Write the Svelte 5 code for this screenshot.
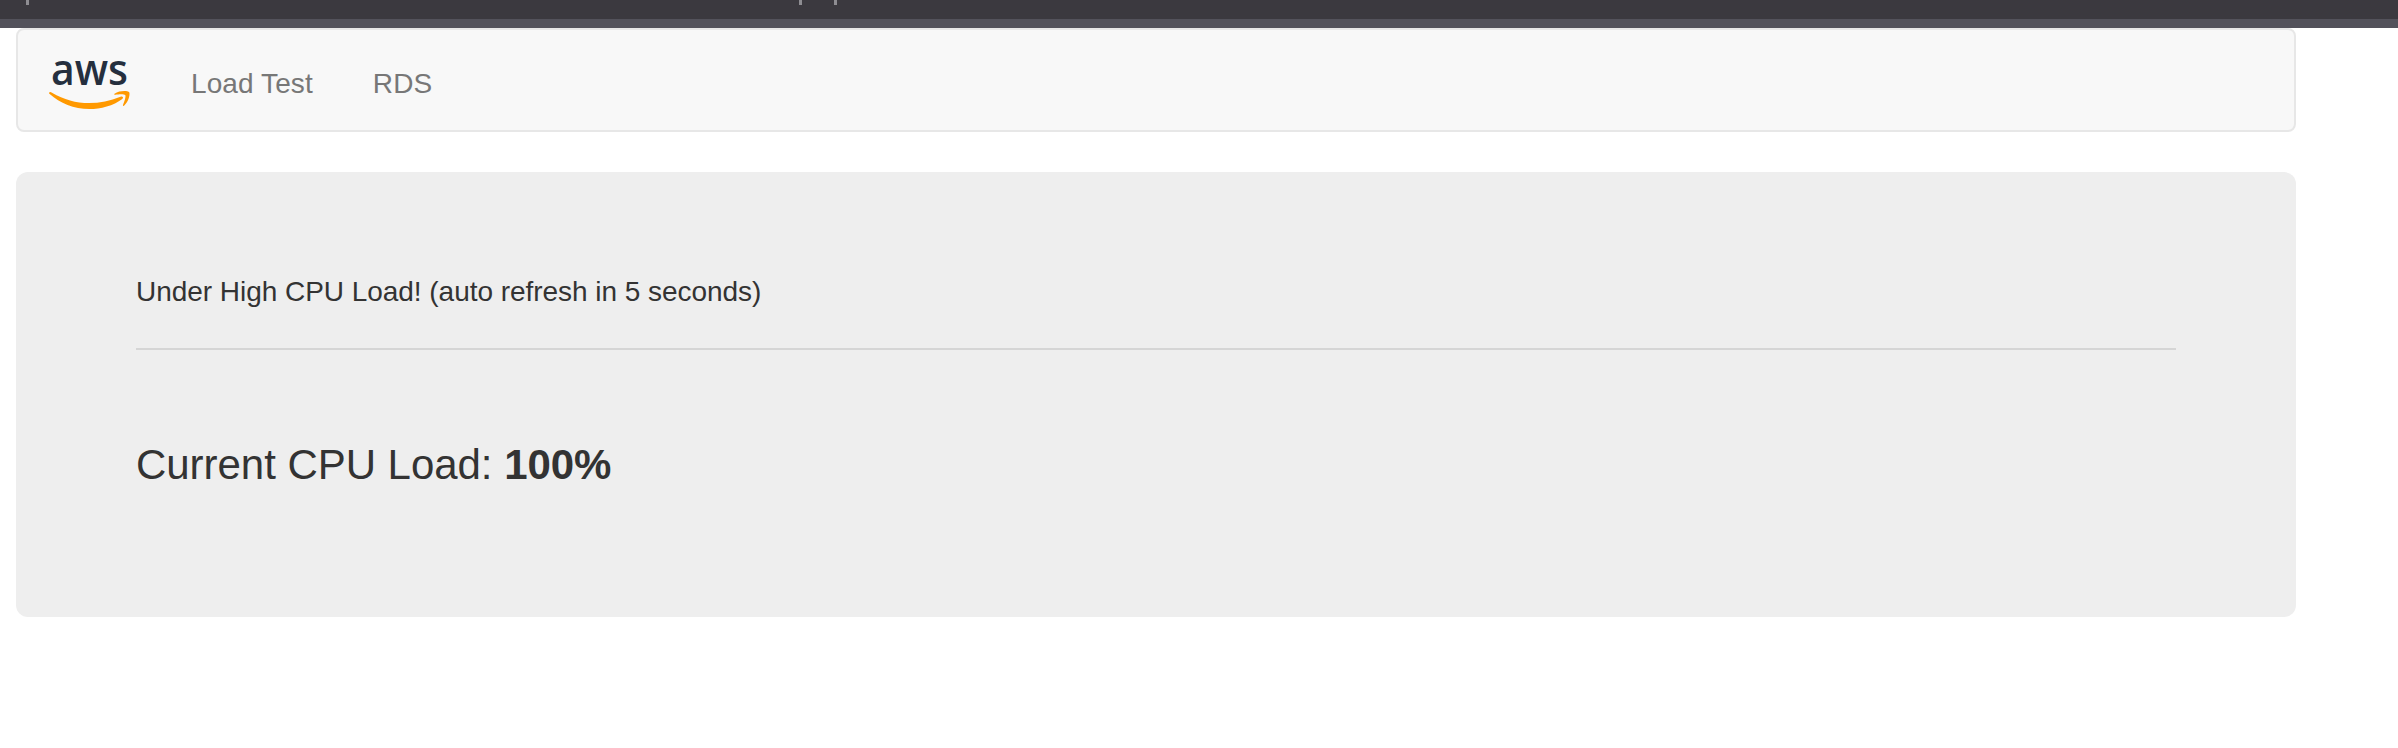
<script>
  const links = ['Load Test', 'RDS'];
  const load = 100;
  const marks = [26, 799, 834];
</script>

<div class="chrome">
  {#each marks as x}<i style="left: {x}px"></i>{/each}
</div>
<main>
  <nav>
    <svg class="logo" width="84" height="80" viewBox="46 40 84 80" role="img" aria-label="aws">
      <text x="51" y="85" textLength="77" lengthAdjust="spacingAndGlyphs">aws</text>
      <path d="M49.4 92.4C50 91.8 51 92.1 52 92.7C64 99.5 76 103.1 89 103.1C100 103.1 110 101 120.5 96.8C122.5 96 124 97.6 122.3 99C113.5 105.7 100.5 109.1 89.5 109.1C73.8 109.1 60 103.3 49.7 94C49 93.4 49 92.8 49.4 92.4Z" />
      <path d="M114.5 93.7C119.5 90.2 127.8 90.6 129.1 92.1C130.4 93.8 128.7 101.7 124.3 105.6C123.5 106.3 122.7 105.9 123 105C124.1 102.3 126.3 96.5 125.2 95.1C124.1 93.7 118.1 94.4 115.3 94.7C114.3 94.9 114 94.2 114.5 93.7Z" />
    </svg>
    {#each links as link}<a href="#top">{link}</a>{/each}
  </nav>
  <section>
    <div class="status">Under High CPU Load! (auto refresh in 5 seconds)</div>
    <hr />
    <p>Current CPU Load: <b>{load}%</b></p>
  </section>
</main>

<style>
  :global(body) { background: #fff; }
  .chrome {
    position: relative;
    box-sizing: border-box;
    height: 28px;
    background: #3b393f;
    border-bottom: 9px solid #53525b;
  }
  .chrome i {
    position: absolute;
    top: 0;
    width: 3px;
    height: 5px;
    background: #8e8d92;
  }
  main {
    width: 2280px;
    margin-left: 16px;
    font-family: "Liberation Sans", Arial, sans-serif;
    font-size: 28px;
    line-height: 40px;
    color: #333;
  }
  nav {
    box-sizing: border-box;
    height: 104px;
    display: flex;
    align-items: center;
    padding-left: 28px;
    border: 2px solid #e7e7e7;
    border-radius: 8px;
    background: #f8f8f8;
  }
  .logo {
    overflow: visible;
    margin-right: 31px;
  }
  .logo text {
    font: 600 44px "Open Sans", "Noto Sans", sans-serif;
    fill: #252f3e;
  }
  .logo path { fill: #f90; }
  a {
    padding: 8px 30px 0;
    color: #777;
    letter-spacing: 0.1px;
    text-decoration: none;
  }
  section {
    box-sizing: border-box;
    height: 445px;
    margin-top: 40px;
    padding: 100px 120px 0;
    border-radius: 12px;
    background: #eee;
  }
  .status { letter-spacing: -0.04px; }
  hr {
    height: 2px;
    margin: 36px 0 0;
    border: 0;
    background: #d5d5d5;
  }
  p {
    margin: 85px 0 0;
    font-size: 42px;
    line-height: 60px;
    letter-spacing: -0.04px;
  }
</style>
